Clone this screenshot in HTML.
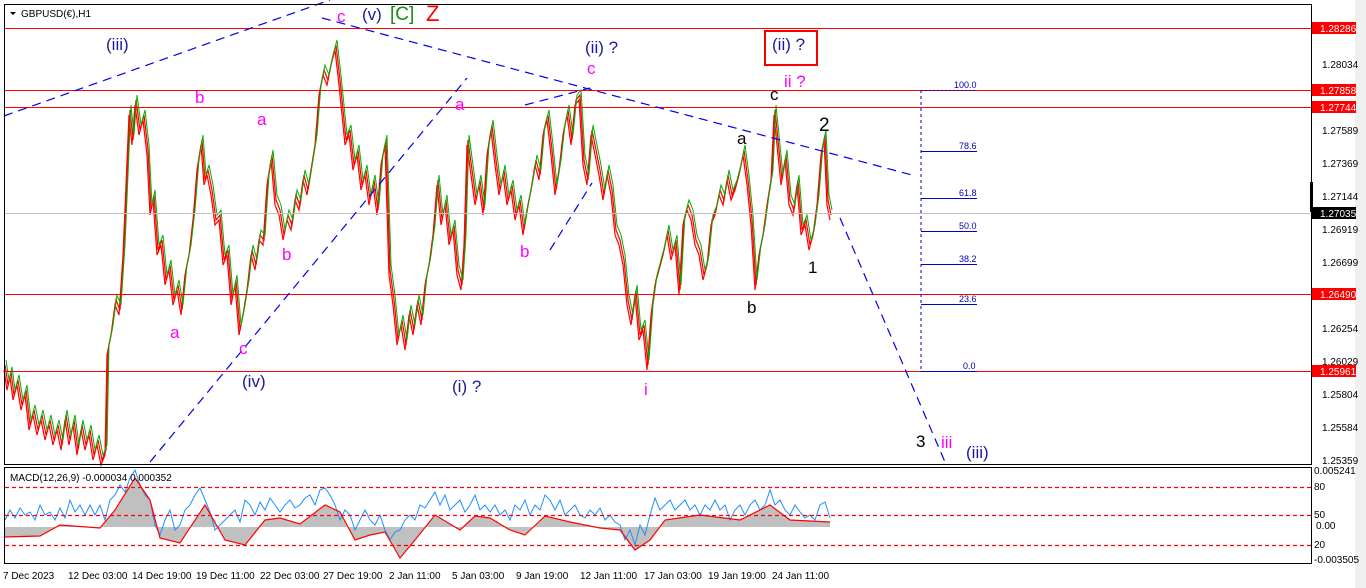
<!DOCTYPE html>
<html><head><meta charset="utf-8"><style>
html,body{margin:0;padding:0;background:#fff;width:1366px;height:588px;overflow:hidden;font-family:"Liberation Sans",sans-serif}
svg{display:block}
</style></head><body>
<svg width="1366" height="588" xmlns="http://www.w3.org/2000/svg" xmlns:xlink="http://www.w3.org/1999/xlink" font-family="Liberation Sans, sans-serif">
<defs>
<path id="pr" d="M5 365 L8 385 11 372 14 395 18 380 22 405 26 390 30 425 34 410 38 430 42 415 46 435 50 420 54 440 58 425 62 445 66 415 70 440 74 420 78 450 82 425 86 445 90 430 94 455 98 440 102 460 106 450 108 350 112 330 116 300 120 310 124 250 127 180 130 110 133 140 136 100 140 130 144 115 148 150 151 210 154 195 158 250 162 240 166 280 170 265 174 300 178 285 182 310 186 270 190 250 194 215 198 165 202 140 205 180 208 170 212 190 216 220 220 215 224 260 228 250 232 300 236 280 240 330 244 310 248 285 252 250 256 265 260 235 264 240 268 180 272 155 276 200 280 210 284 235 288 215 292 225 296 195 300 205 304 175 308 190 312 165 316 140 320 90 324 70 328 80 332 60 336 45 340 80 343 110 346 140 350 130 354 165 358 150 362 185 366 170 370 200 374 180 378 210 382 160 386 140 390 270 394 300 398 340 402 320 406 345 410 310 414 330 418 300 422 320 426 280 430 260 434 230 438 180 442 220 446 200 450 240 454 225 458 270 462 285 465 240 468 140 472 170 476 200 480 180 484 210 488 150 492 125 496 160 500 190 504 170 508 200 512 185 516 215 520 200 524 230 528 205 532 185 536 160 540 175 544 130 548 115 552 150 556 190 560 165 564 130 568 110 572 140 576 100 580 95 584 160 588 180 592 130 596 150 600 170 604 195 608 170 612 190 616 230 620 240 624 260 628 300 632 320 636 290 640 335 644 325 648 365 652 310 656 280 660 265 664 250 668 230 672 255 676 240 680 290 684 220 688 205 692 215 696 240 700 250 704 275 708 260 712 220 716 210 720 190 724 200 728 175 732 195 736 185 740 170 744 150 748 180 752 220 756 285 760 250 764 230 768 200 772 175 775 110 778 140 782 180 786 155 790 200 794 210 798 180 802 230 806 220 810 245 814 230 818 200 822 150 825 135 828 200 831 215"/>
</defs>
<rect x="0" y="0" width="1366" height="588" fill="#fff"/>
<rect x="1355" y="0" width="11" height="588" fill="#f0f0f0"/>
<g fill="none">
<use xlink:href="#pr" href="#pr" stroke="#ff0000" stroke-width="1.2" transform="translate(-1,5)"/>
<use xlink:href="#pr" href="#pr" stroke="#ff0000" stroke-width="1.2"/>
<use xlink:href="#pr" href="#pr" stroke="#00b000" stroke-width="1" transform="translate(1,-5)"/>
</g>
<g stroke="#ff0000" stroke-width="1">
<line x1="4" y1="28.5" x2="1311" y2="28.5"/>
<line x1="4" y1="90.5" x2="1311" y2="90.5"/>
<line x1="4" y1="107.5" x2="1311" y2="107.5"/>
<line x1="4" y1="294.5" x2="1311" y2="294.5"/>
<line x1="4" y1="371.5" x2="1311" y2="371.5"/>
</g>
<line x1="4" y1="213.5" x2="1311" y2="213.5" stroke="#c0c0c0"/>
<g stroke="#0000ee" stroke-width="1.2" stroke-dasharray="9,6" fill="none">
<line x1="4" y1="116" x2="330" y2="0"/>
<line x1="322" y1="18" x2="912" y2="175"/>
<line x1="150" y1="462" x2="467" y2="78"/>
<line x1="525" y1="105" x2="590" y2="88"/>
<line x1="550" y1="250" x2="592" y2="183"/>
<line x1="840" y1="218" x2="945" y2="462"/>
</g>
<g stroke="#0000cc" stroke-width="1">
<line x1="921" y1="90" x2="921" y2="371" stroke-dasharray="3,3"/>
<line x1="921" y1="90.5" x2="977" y2="90.5" stroke-dasharray="2,2"/>
<line x1="921" y1="151.5" x2="977" y2="151.5"/>
<line x1="921" y1="198.5" x2="977" y2="198.5"/>
<line x1="921" y1="231.5" x2="977" y2="231.5"/>
<line x1="921" y1="264.5" x2="977" y2="264.5"/>
<line x1="921" y1="304.5" x2="977" y2="304.5"/>
<line x1="921" y1="371.5" x2="977" y2="371.5"/>
</g>
<g fill="#0000aa" font-size="9">
<text x="954" y="88">100.0</text><text x="959" y="149">78.6</text><text x="959" y="196">61.8</text>
<text x="959" y="229">50.0</text><text x="959" y="262">38.2</text><text x="959" y="302">23.6</text><text x="963" y="369">0.0</text>
</g>
<path fill="#c0c0c0" d="M5 527 L5 537 40 536 60 525 100 528 115 510 135 478 150 500 160 538 180 543 205 505 225 540 245 545 265 520 280 518 300 524 325 505 340 512 355 540 370 535 385 532 400 558 415 540 435 515 460 530 475 516 490 518 510 530 525 535 545 516 570 522 600 528 620 530 635 550 650 540 665 520 700 515 740 520 770 505 790 520 830 522 L830 527Z"/>
<polyline fill="none" stroke="#1e90ff" points="5,520 10,510 15,518 20,508 25,515 30,512 35,520 40,505 45,515 50,512 55,520 60,508 65,518 70,500 75,512 80,505 85,515 90,505 95,515 100,505 105,520 110,500 115,495 120,485 125,492 130,478 135,470 140,485 145,495 150,500 155,525 160,535 165,520 170,510 175,530 180,525 185,510 190,505 195,495 200,488 205,500 210,512 215,530 220,525 225,520 230,515 235,510 240,522 245,500 250,505 255,515 260,502 265,510 270,498 275,505 280,512 285,505 290,500 295,508 300,505 305,498 310,495 315,505 320,490 325,488 330,495 335,505 340,520 345,510 350,515 355,530 360,520 365,510 370,520 375,525 380,515 385,530 390,540 395,532 400,530 405,520 410,515 415,520 420,505 425,508 430,500 435,492 440,505 445,495 450,510 455,505 460,500 465,512 470,505 475,495 480,510 485,505 490,512 495,505 500,515 505,510 510,520 515,505 520,510 525,500 530,515 535,505 540,510 545,495 550,500 555,510 560,500 565,515 570,510 575,505 580,515 585,518 590,510 595,515 600,508 605,520 610,515 615,522 620,525 625,540 630,530 635,545 640,525 645,535 650,515 655,498 660,510 665,505 670,500 675,510 680,505 685,500 690,510 695,505 700,515 705,505 710,510 715,500 720,510 725,505 730,520 735,510 740,505 745,515 750,505 755,500 760,510 765,505 770,490 775,505 780,500 785,510 790,515 795,505 800,512 805,518 810,515 815,520 820,505 825,502 830,518"/>
<polyline fill="none" stroke="#ff0000" stroke-width="1.2" points="5,537 40,536 60,525 100,528 115,510 135,478 150,500 160,538 180,543 205,505 225,540 245,545 265,520 280,518 300,524 325,505 340,512 355,540 370,535 385,532 400,558 415,540 435,515 460,530 475,516 490,518 510,530 525,535 545,516 570,522 600,528 620,530 635,550 650,540 665,520 700,515 740,520 770,505 790,520 830,522"/>
<g stroke="#ff0000" stroke-width="1.2" stroke-dasharray="4,3" fill="none">
<line x1="5" y1="487.5" x2="1311" y2="487.5"/>
<line x1="5" y1="515.5" x2="1311" y2="515.5"/>
<line x1="5" y1="545.5" x2="1311" y2="545.5"/>
</g>
<rect x="4.5" y="4.5" width="1307" height="460" fill="none" stroke="#000"/>
<rect x="4.5" y="467.5" width="1307" height="96" fill="none" stroke="#000"/>
<text x="10" y="481" font-size="10" fill="#000">MACD(12,26,9) -0.000034 0.000352</text>
<path d="M10 12 L16 12 L13 15Z" fill="#000"/>
<text x="21" y="17" font-size="10" fill="#000">GBPUSD(€),H1</text>
<g font-size="10" fill="#000">
<text x="1322" y="68">1.28034</text><text x="1322" y="134">1.27589</text><text x="1322" y="167">1.27369</text>
<text x="1322" y="200">1.27144</text><text x="1322" y="233">1.26919</text><text x="1322" y="266">1.26699</text>
<text x="1322" y="332">1.26254</text><text x="1322" y="365">1.26029</text><text x="1322" y="398">1.25804</text>
<text x="1322" y="431">1.25584</text><text x="1322" y="464">1.25359</text>
<text x="1314" y="474">0.005241</text><text x="1314" y="490">80</text><text x="1314" y="518">50</text>
<text x="1316" y="529">0.00</text><text x="1314" y="548">20</text><text x="1314" y="563">-0.003505</text>
</g>
<rect x="1312" y="22" width="44" height="12" fill="#ff0000"/><text x="1320" y="32" font-size="10" fill="#fff">1.28286</text>
<rect x="1312" y="84" width="44" height="12" fill="#ff0000"/><text x="1320" y="94" font-size="10" fill="#fff">1.27858</text>
<rect x="1312" y="101" width="44" height="12" fill="#ff0000"/><text x="1320" y="111" font-size="10" fill="#fff">1.27744</text>
<rect x="1312" y="207" width="44" height="12" fill="#000"/><text x="1320" y="217" font-size="10" fill="#fff">1.27035</text>
<rect x="1310" y="182" width="3" height="30" fill="#000"/>
<rect x="1312" y="288" width="44" height="12" fill="#ff0000"/><text x="1320" y="298" font-size="10" fill="#fff">1.26490</text>
<rect x="1312" y="365" width="44" height="12" fill="#ff0000"/><text x="1320" y="375" font-size="10" fill="#fff">1.25961</text>
<g font-size="10" fill="#000">
<text x="3" y="579">7 Dec 2023</text><text x="68" y="579">12 Dec 03:00</text><text x="132" y="579">14 Dec 19:00</text>
<text x="196" y="579">19 Dec 11:00</text><text x="260" y="579">22 Dec 03:00</text><text x="323" y="579">27 Dec 19:00</text>
<text x="389" y="579">2 Jan 11:00</text><text x="452" y="579">5 Jan 03:00</text><text x="516" y="579">9 Jan 19:00</text>
<text x="580" y="579">12 Jan 11:00</text><text x="644" y="579">17 Jan 03:00</text><text x="708" y="579">19 Jan 19:00</text>
<text x="772" y="579">24 Jan 11:00</text>
</g>
<g font-size="17">
<text x="106" y="50" fill="#1a1aa0">(iii)</text>
<text x="362" y="20" fill="#1a1aa0">(v)</text>
<text x="390" y="20" fill="#1a8a1a" font-size="19">[C]</text>
<text x="426" y="21" fill="#ff0000" font-size="22">Z</text>
<text x="337" y="22" fill="#ff00ff">c</text>
<text x="585" y="53" fill="#1a1aa0">(ii) ?</text>
<text x="587" y="74" fill="#ff00ff">c</text>
<text x="772" y="50" fill="#1a1aa0">(ii) ?</text>
<text x="784" y="87" fill="#ff00ff">ii ?</text>
<text x="770" y="100" fill="#000">c</text>
<text x="737" y="144" fill="#000">a</text>
<text x="819" y="131" fill="#000" font-size="19">2</text>
<text x="808" y="273" fill="#000">1</text>
<text x="747" y="313" fill="#000">b</text>
<text x="916" y="447" fill="#000">3</text>
<text x="941" y="448" fill="#ff00ff">iii</text>
<text x="966" y="458" fill="#1a1aa0">(iii)</text>
<text x="195" y="103" fill="#ff00ff">b</text>
<text x="257" y="125" fill="#ff00ff">a</text>
<text x="455" y="110" fill="#ff00ff">a</text>
<text x="282" y="260" fill="#ff00ff">b</text>
<text x="520" y="257" fill="#ff00ff">b</text>
<text x="170" y="338" fill="#ff00ff">a</text>
<text x="239" y="354" fill="#ff00ff">c</text>
<text x="644" y="395" fill="#ff00ff">i</text>
<text x="242" y="387" fill="#1a1aa0">(iv)</text>
<text x="452" y="392" fill="#1a1aa0">(i) ?</text>
</g>
<rect x="765" y="31" width="52" height="34" fill="none" stroke="#ff0000" stroke-width="2"/>
</svg>
</body></html>
